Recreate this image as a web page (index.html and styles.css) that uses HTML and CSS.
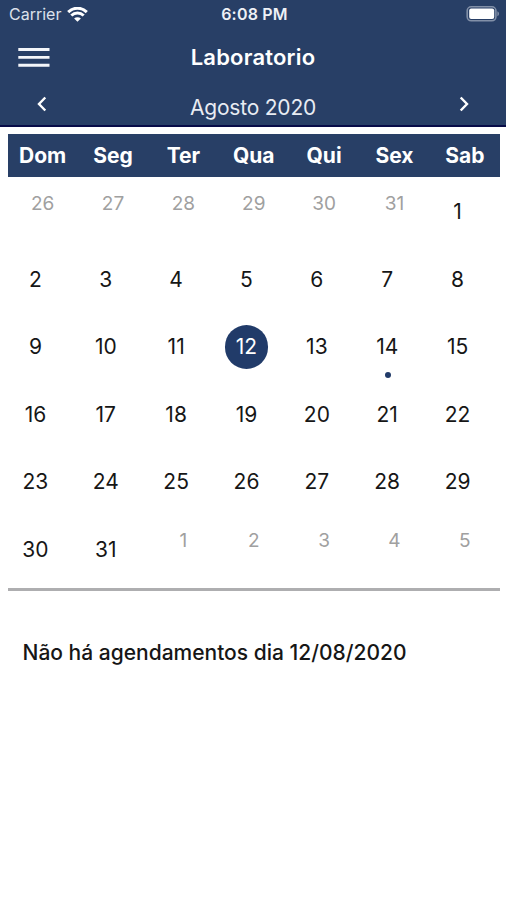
FILE: index.html
```html
<!DOCTYPE html>
<html lang="pt-BR">
<head>
<meta charset="utf-8">
<meta name="viewport" content="width=device-width, initial-scale=1">
<title>Laboratorio</title>
<link rel="stylesheet" href="styles.css">
</head>
<body>
<header class="header">
  <div class="status">
    <div class="carrier"><span class="carrier-name">Carrier</span>
      <svg class="wifi" viewBox="0 0 21 15" width="21" height="15"><path d="M1.2 5.1C6.5-.1 14.500-.1 19.800 5.100" /><path d="M4.300 8.500c3.600-3.400 8.800-3.400 12.400 0"/><path class="solid" d="M10.500 14.800 7.100 11.400c1.900-1.700 4.900-1.700 6.800 0z"/></svg>
    </div>
    <span class="time">6:08 PM</span>
    <svg class="battery" viewBox="0 0 34 16" width="34" height="16"><rect class="shell" x="1.200" y=".8" width="28.700" height="14" rx="4"/><rect class="charge" x="3.200" y="2.500" width="25" height="10.600" rx="2"/><path class="tip" d="M31.400 5.300c2.100 1 2.100 4 0 5z"/></svg>
  </div>
  <div class="toolbar">
    <svg class="menu" viewBox="0 0 32 21" width="32" height="21"><path d="M.3 2.500h31.200M.3 10.400h31.200M.3 18.200h31.200"/></svg>
    <h1 class="title">Laboratorio</h1>
    <span></span>
  </div>
  <div class="month">
    <svg class="arrow" viewBox="0 0 10 16" width="10" height="16"><path d="M8.300 1.500 2 8l6.300 6.500"/></svg>
    <span class="month-name">Agosto 2020</span>
    <svg class="arrow" viewBox="0 0 10 16" width="10" height="16"><path d="M1.700 1.500 8 8l-6.300 6.500"/></svg>
  </div>
</header>
<main class="content">
  <div class="weekdays"><span>Dom</span><span>Seg</span><span>Ter</span><span>Qua</span><span>Qui</span><span>Sex</span><span>Sab</span></div>
  <div class="days">
    <span class="out">26</span><span class="out">27</span><span class="out">28</span><span class="out">29</span><span class="out">30</span><span class="out">31</span><span class="day">1</span>
    <span class="day">2</span><span class="day">3</span><span class="day">4</span><span class="day">5</span><span class="day">6</span><span class="day">7</span><span class="day">8</span>
    <span class="day">9</span><span class="day">10</span><span class="day">11</span><span class="day selected">12</span><span class="day">13</span><span class="day event">14</span><span class="day">15</span>
    <span class="day">16</span><span class="day">17</span><span class="day">18</span><span class="day">19</span><span class="day">20</span><span class="day">21</span><span class="day">22</span>
    <span class="day">23</span><span class="day">24</span><span class="day">25</span><span class="day">26</span><span class="day">27</span><span class="day">28</span><span class="day">29</span>
    <span class="day">30</span><span class="day">31</span><span class="out">1</span><span class="out">2</span><span class="out">3</span><span class="out">4</span><span class="out">5</span>
  </div>
  <p class="message">Não há agendamentos dia 12/08/2020</p>
</main>
</body>
</html>
```
FILE: styles.css
```css
* { box-sizing: border-box; }
body { margin: 0; background: #fff; color: #161616; font-family: Inter, sans-serif; }
svg { display: block; }
.header { height: 127px; background: #283f66; border-bottom: 2px solid #080c48; color: #fff; }
.status { height: 28px; display: grid; grid-template-columns: 1fr auto 1fr; align-items: center; padding: 0 6px 0 9px; }
.carrier { display: flex; align-items: center; gap: 6px; color: #dbe1eb; }
.carrier-name { font-size: 16px; line-height: 20px; }
.wifi { fill: none; stroke: #fff; stroke-width: 3; }
.wifi .solid { fill: #fff; stroke: none; }
.time { font-size: 16px; font-weight: 600; letter-spacing: 0.2px; color: #eef1f6; }
.battery { justify-self: end; }
.shell { fill: none; stroke: #8290a8; stroke-width: 1.6; }
.charge { fill: #fff; }
.tip { fill: #8290a8; }
.toolbar { height: 58px; display: grid; grid-template-columns: 1fr auto 1fr; align-items: center; padding: 0 18px; }
.menu { margin-top: 1px; fill: none; stroke: #f4f6fa; stroke-width: 2.9; }
.title { margin: 0 0 1px; font-size: 22px; line-height: 28px; font-weight: 600; letter-spacing: 0.2px; }
.month { height: 39px; display: flex; justify-content: space-between; padding: 10px 37px 0; }
.arrow { fill: none; stroke: #fff; stroke-width: 2.4; }
.month-name { font-size: 21px; line-height: 24px; letter-spacing: -0.2px; color: #e8ecf3; }
.content { padding: 7px 6px 0 7.5px; }
.weekdays { display: grid; grid-template-columns: repeat(7, 1fr); height: 43px; line-height: 43px; background: #283f66; color: #fff; font-size: 21px; font-weight: 700; text-align: center; }
.days { display: grid; grid-template-columns: repeat(7, 1fr); grid-auto-rows: 67.5px; height: 414px; border-bottom: 3px solid #aeaeb0; }
.out { padding-top: 14.500px; text-align: center; font-size: 19px; line-height: 24px; color: #a0a0a0; }
.day { position: relative; width: 43.500px; height: 43.500px; margin: 13.200px 0 0 6.200px; text-align: center; font-size: 21px; line-height: 43px; }
.selected { border-radius: 50%; background: #213b69; color: #fff; line-height: 44px; }
.event::after { content: ""; position: absolute; left: 19.500px; top: 46.800px; width: 6px; height: 6px; border-radius: 50%; background: #213b69; }
.message { margin: 48px 0 0 15px; font-size: 21px; line-height: 28px; font-weight: 500; }
```
